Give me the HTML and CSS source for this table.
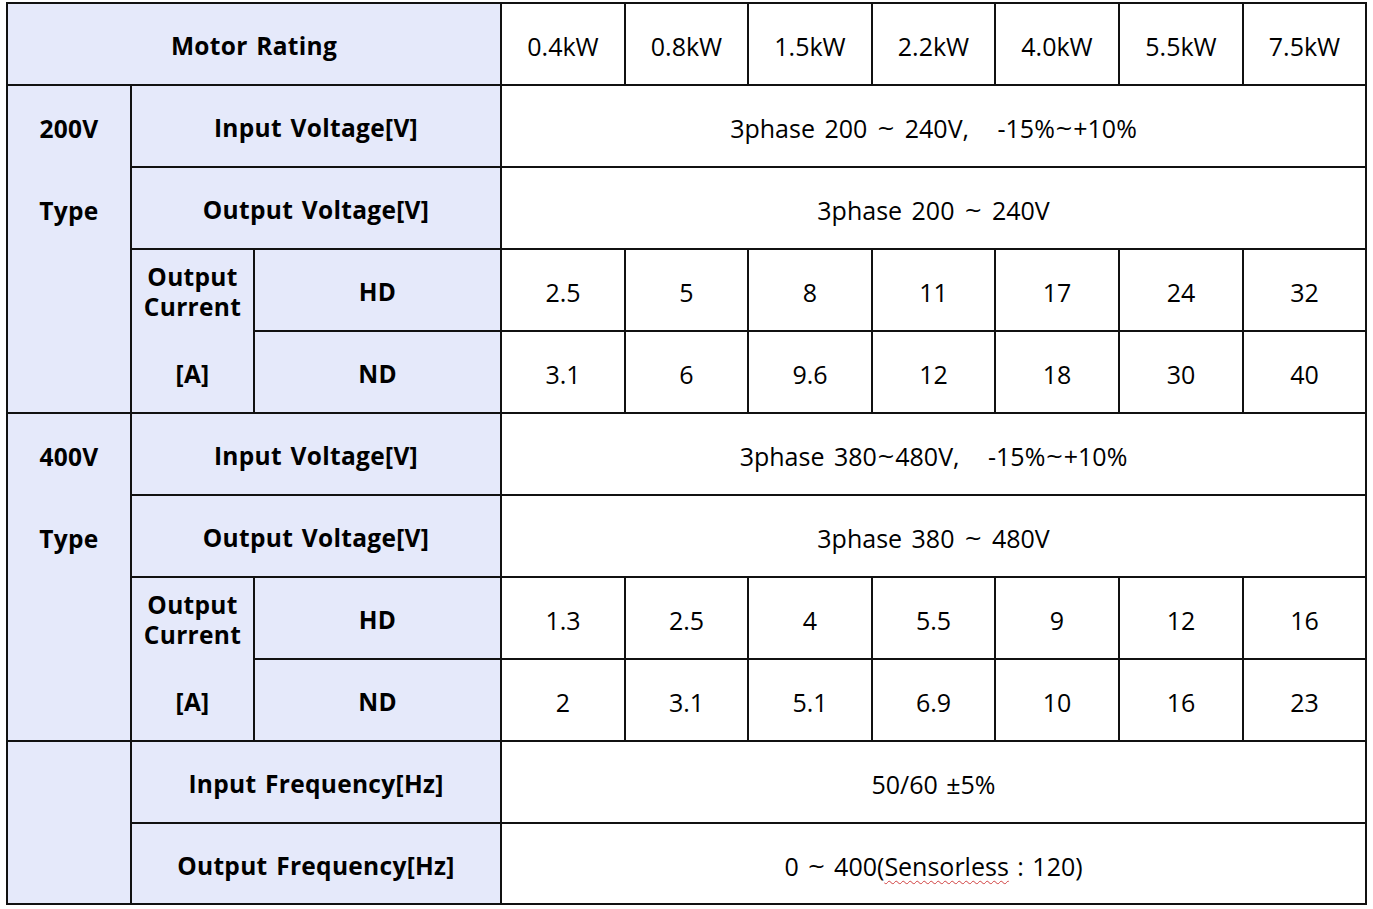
FILE: index.html
```html
<!DOCTYPE html>
<html lang="en">
<head>
<meta charset="utf-8">
<title>Motor Rating</title>
<link rel="stylesheet" href="styles.css">
</head>
<body>
<div class="spec">
  <div class="cell head span3">Motor Rating</div>
  <div class="cell">0.4kW</div>
  <div class="cell">0.8kW</div>
  <div class="cell">1.5kW</div>
  <div class="cell">2.2kW</div>
  <div class="cell">4.0kW</div>
  <div class="cell">5.5kW</div>
  <div class="cell">7.5kW</div>

  <div class="cell head type rows4"><span>200V</span><span class="type-word">Type</span></div>
  <div class="cell head span2">Input Voltage[V]</div>
  <div class="cell span7 pre wide">3phase 200 <span class="tl">~</span> 240V,   -15%<span class="tl">~</span>+10%</div>
  <div class="cell head span2">Output Voltage[V]</div>
  <div class="cell span7 pre wide">3phase 200 <span class="tl">~</span> 240V</div>
  <div class="cell head current rows2"><span>Output</span><span>Current</span><span class="unit">[A]</span></div>
  <div class="cell head">HD</div>
  <div class="cell">2.5</div><div class="cell">5</div><div class="cell">8</div><div class="cell">11</div><div class="cell">17</div><div class="cell">24</div><div class="cell">32</div>
  <div class="cell head">ND</div>
  <div class="cell">3.1</div><div class="cell">6</div><div class="cell">9.6</div><div class="cell">12</div><div class="cell">18</div><div class="cell">30</div><div class="cell">40</div>

  <div class="cell head type rows4"><span>400V</span><span class="type-word">Type</span></div>
  <div class="cell head span2">Input Voltage[V]</div>
  <div class="cell span7 pre wide">3phase 380<span class="tl">~</span>480V,   -15%<span class="tl">~</span>+10%</div>
  <div class="cell head span2">Output Voltage[V]</div>
  <div class="cell span7 pre wide">3phase 380 <span class="tl">~</span> 480V</div>
  <div class="cell head current rows2"><span>Output</span><span>Current</span><span class="unit">[A]</span></div>
  <div class="cell head">HD</div>
  <div class="cell">1.3</div><div class="cell">2.5</div><div class="cell">4</div><div class="cell">5.5</div><div class="cell">9</div><div class="cell">12</div><div class="cell">16</div>
  <div class="cell head">ND</div>
  <div class="cell">2</div><div class="cell">3.1</div><div class="cell">5.1</div><div class="cell">6.9</div><div class="cell">10</div><div class="cell">16</div><div class="cell">23</div>

  <div class="cell head rows2"></div>
  <div class="cell head span2">Input Frequency[Hz]</div>
  <div class="cell span7">50/60 ±5%</div>
  <div class="cell head span2">Output Frequency[Hz]</div>
  <div class="cell span7 pre">0 <span class="tl">~</span> 400(<span class="spell">Sensorless</span> : 120)</div>
</div>
</body>
</html>
```

FILE: styles.css
```css
html, body {
  margin: 0;
  padding: 0;
  background: #ffffff;
}

body {
  font-family: "Open Sans", "Noto Sans", "Noto Sans CJK KR", sans-serif;
  color: #000;
}

.spec {
  display: grid;
  grid-template-columns: 122px 121px 245px 122px 121px 122px 121px 122px 122px 121px;
  grid-template-rows: repeat(10, 80px) 79px;
  gap: 2px;
  padding: 2px;
  background: #111;
  width: max-content;
  margin: 2px 0 0 6px;
}

.cell {
  background: #fff;
  display: flex;
  align-items: center;
  justify-content: center;
  box-sizing: border-box;
  padding-top: 4px;
  font-size: 25px;
  line-height: 30px;
  word-spacing: 2px;
  text-align: center;
}

.wide { word-spacing: 3px; }

.tl {
  font-family: "DejaVu Sans", sans-serif;
  font-size: 22px;
}

.head {
  background: #e5e9fa;
  font-weight: 700;
  font-size: 24.5px;
  letter-spacing: 0.3px;
}

.span2 { grid-column: span 2; }
.span3 { grid-column: span 3; }
.span7 { grid-column: span 7; }
.rows2 { grid-row: span 2; }
.rows4 { grid-row: span 4; }

.pre { white-space: pre; }

.type {
  flex-direction: column;
  justify-content: flex-start;
  padding-top: 28px;
}
.type-word { margin-top: 52px; }

.current {
  flex-direction: column;
  justify-content: flex-start;
  padding-top: 12px;
}
.current .unit { margin-top: 37px; }

.spell {
  text-decoration: underline wavy #d04040 1px;
  text-underline-offset: 4px;
}
```
